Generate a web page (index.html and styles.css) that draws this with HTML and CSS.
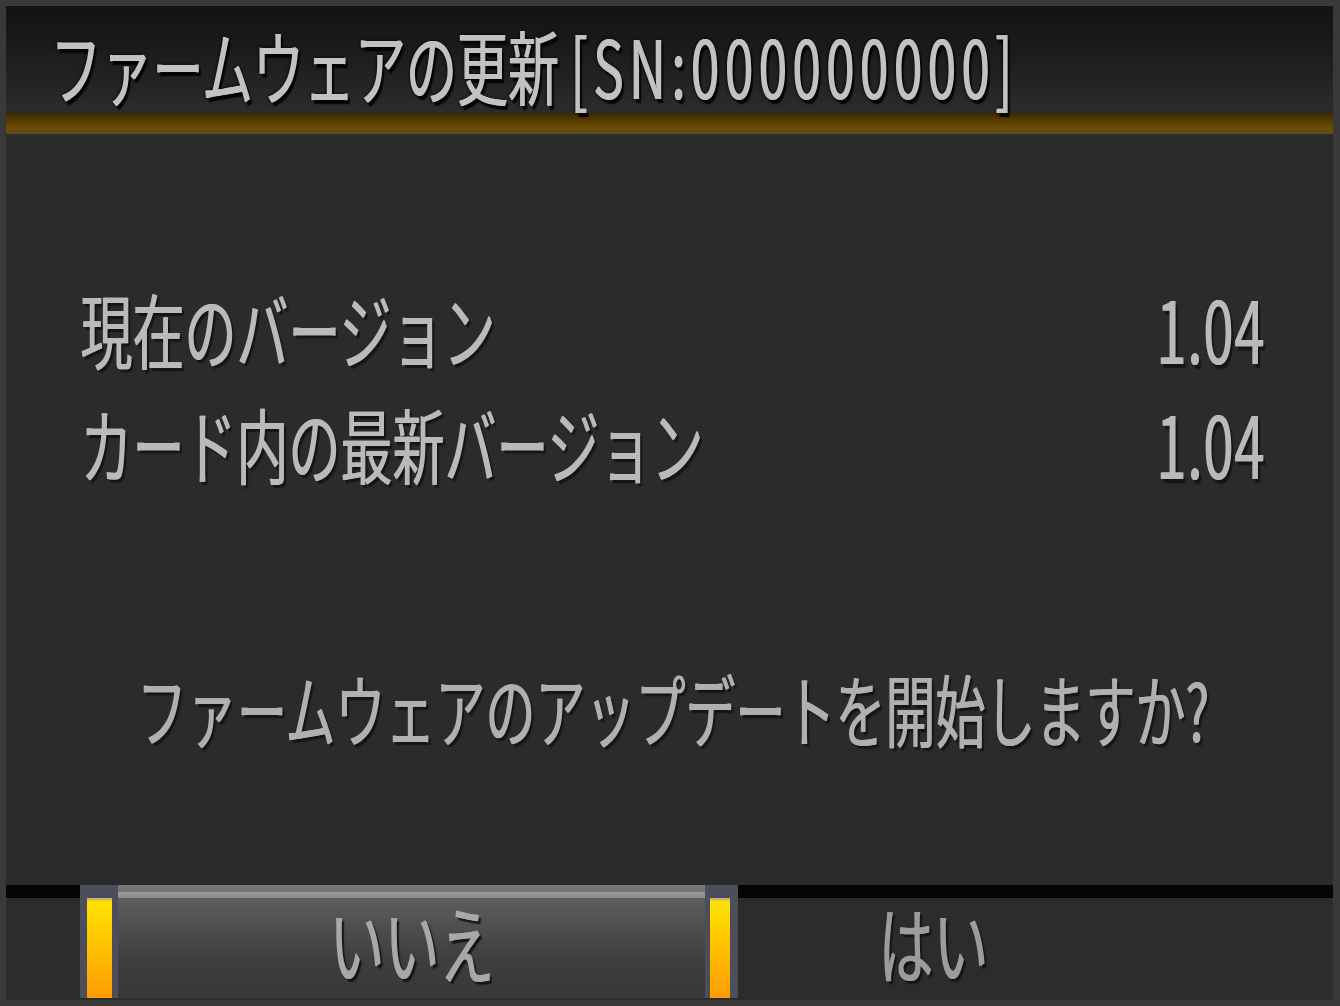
FILE: index.html
```html
<!DOCTYPE html>
<html lang="ja">
<head>
  <meta charset="UTF-8">
  <meta name="viewport" content="width=device-width, initial-scale=1.0">
  <title>ファームウェアの更新</title>
  <link rel="stylesheet" href="styles.css">
</head>
<body>
  <div class="frame">
    <div class="screen">
      <header class="title-bar">
        <h1 class="title">ファームウェアの更新 <span class="serial">[SN:000000000]</span></h1>
      </header>
      <div class="stripe"></div>

      <main class="content">
        <dl class="versions">
          <div class="row">
            <dt>現在のバージョン</dt>
            <dd>1.04</dd>
          </div>
          <div class="row">
            <dt>カード内の最新バージョン</dt>
            <dd>1.04</dd>
          </div>
        </dl>
        <p class="question">ファームウェアのアップデートを開始しますか?</p>
      </main>

      <footer class="choices">
        <div class="choice selected">
          <span class="edge edge-left"></span>
          <span class="label">いいえ</span>
          <span class="edge edge-right"></span>
        </div>
        <div class="choice">
          <span class="label">はい</span>
        </div>
      </footer>
    </div>
  </div>
</body>
</html>
```

FILE: styles.css
```css
body {
  margin: 0;
  background: #393939;
  font-family: "Noto Sans CJK JP", "Noto Sans", sans-serif;
}
.frame {
  padding: 6px 7px 6px 6px;
}
.screen {
  height: 994px;
  display: flex;
  flex-direction: column;
  background: #2b2b2b;
}
.title-bar {
  height: 107px;
  box-sizing: border-box;
  padding: 34px 0 0 44px;
  background: linear-gradient(#131313, #1b1b1b 40%, #2c2c2c);
}
.title {
  margin: 0;
  display: inline-block;
  font-size: 51px;
  line-height: 1;
  font-weight: 400;
  color: #c2c2c2;
  white-space: nowrap;
  transform: scaleY(1.58);
  text-shadow: 1px 0 0 #c2c2c2, 3px 2px 1px #050505, 0 0 3px #000;
}
.serial {
  letter-spacing: 5.5px;
}
.stripe {
  height: 21px;
  background: linear-gradient(#3a2900, #553b00 35%, #6b4c06 65%, #5d4c1a);
}
.content {
  flex: 1;
  padding: 168px 68px 0 74px;
}
.versions {
  margin: 0;
}
.row {
  display: flex;
  justify-content: space-between;
  align-items: center;
  height: 52px;
}
.row + .row {
  margin-top: 63px;
}
.row dt, .row dd {
  margin: 0;
  line-height: 1;
  font-weight: 400;
  color: #bababa;
  transform: scaleY(1.58);
  text-shadow: 1px 0 0 #bababa, 3px 2px 1px #151515;
  white-space: nowrap;
}
.row dt {
  font-size: 52px;
}
.row dd {
  font-size: 54px;
  letter-spacing: 1px;
}
.question {
  margin: 213px 0 0;
  text-align: center;
  font-size: 50px;
  line-height: 1;
  font-weight: 400;
  color: #b0b0b0;
  white-space: nowrap;
  transform: scaleY(1.58);
  text-shadow: 1px 0 0 #b0b0b0, 3px 2px 1px #151515;
}
.choices {
  height: 115px;
  box-sizing: border-box;
  display: flex;
  padding-left: 74px;
  background: linear-gradient(#050505 0, #050505 13px, #2c2c2c 13px);
}
.choice {
  display: flex;
  height: 113px;
}
.choice .label {
  padding-top: 30px;
  font-size: 55px;
  line-height: 1;
  font-weight: 400;
  color: #9c9c9c;
  transform: scaleY(1.55);
  transform-origin: 50% 60px;
  text-shadow: 1px 0 0 #9c9c9c, 3px 2px 1px #151515;
  white-space: nowrap;
}
.choice:not(.selected) .label {
  padding-left: 140px;
}
.selected {
  width: 658px;
  background: linear-gradient(#767676 0, #767676 7px, #9b9b9b 7px, #8c8c8c 13px, #5e5e5e 13px, #4d4d4d 45px, #3e3e3e 75px, #383838);
}
.selected .label {
  flex: 1;
  text-align: center;
  color: #a8a8a8;
  text-shadow: 1px 0 0 #a8a8a8, 3px 2px 1px #151515;
}
.edge {
  display: flex;
  padding-top: 13px;
  background: #4c4f5b;
}
.edge::before {
  content: "";
  flex: 1;
  background: linear-gradient(#c8b46c 0, #c8b46c 2px, #ffe300 3px, #ffc400 45%, #ff9c00);
}
.edge-left {
  width: 25px;
  padding-left: 7px;
  padding-right: 6px;
}
.edge-right {
  width: 20px;
  padding-left: 5px;
  padding-right: 8px;
}
```
